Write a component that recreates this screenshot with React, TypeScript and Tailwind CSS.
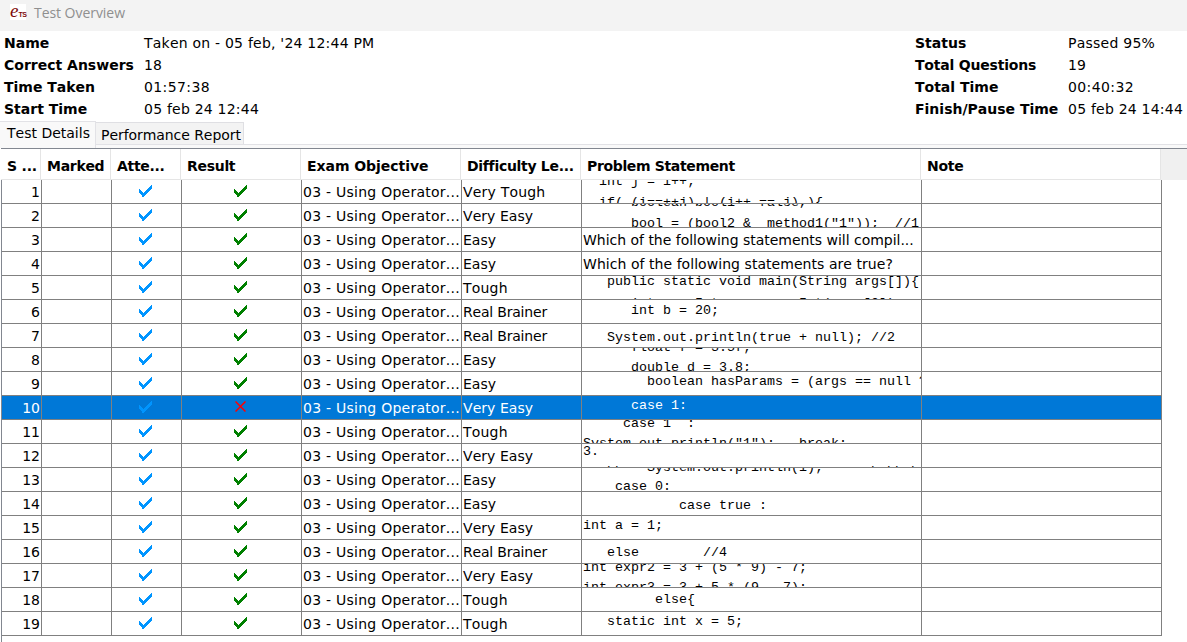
import React from "react";

type Line = { y: number; t: string };
type Row = { diff: string; text?: string; track?: string; code?: Line[] };

const rows: Row[] = [
  { diff: "Very Tough", code: [{ y: 6, t: "  int j = i++;" }, { y: 27, t: "  if( (i==++j) | (i++ == j) ){" }] },
  { diff: "Very Easy", code: [{ y: 3, t: "      boolean bool1 = false," }, { y: 24, t: '      bool = (bool2 &  method1("1"));  //1' }] },
  { diff: "Easy", text: "Which of the following statements will compil...", track: "tracking-[-0.02px]" },
  { diff: "Easy", text: "Which of the following statements are true?", track: "tracking-[0.05px]" },
  { diff: "Tough", code: [{ y: 10, t: "   public static void main(String args[]){" }, { y: 32, t: "      int x = Integer.parseInt(args[0]);" }] },
  { diff: "Real Brainer", code: [{ y: 15, t: "      int b = 20;" }] },
  { diff: "Real Brainer", code: [{ y: 18, t: "   System.out.println(true + null); //2" }] },
  { diff: "Easy", code: [{ y: 4, t: "      float f = 3.5f;" }, { y: 24, t: "      double d = 3.8;" }] },
  { diff: "Easy", code: [{ y: 14, t: "        boolean hasParams = (args == null ? false : true);" }] },
  { diff: "Very Easy", code: [{ y: 14, t: "      case 1:" }] },
  { diff: "Tough", code: [{ y: 8, t: "     case 1  :" }, { y: 28, t: 'System.out.println("1");   break;' }] },
  { diff: "Very Easy", code: [{ y: 12, t: "3." }, { y: 32, t: "   bb                               b bh b" }] },
  { diff: "Easy", code: [{ y: 4, t: "        System.out.println(i);" }, { y: 23, t: "    case 0:" }] },
  { diff: "Easy", code: [{ y: 18, t: "            case true :" }] },
  { diff: "Very Easy", code: [{ y: 14, t: "int a = 1;" }] },
  { diff: "Real Brainer", code: [{ y: 17, t: "   else        //4" }] },
  { diff: "Very Easy", code: [{ y: 8, t: "int expr2 = 3 + (5 * 9) - 7;" }, { y: 28, t: "int expr3 = 3 + 5 * (9 - 7);" }] },
  { diff: "Tough", code: [{ y: 16, t: "         else{" }] },
  { diff: "Tough", code: [{ y: 14, t: "   static int x = 5;" }] },
];

const diffTrack: Record<string, string> = {
  "Very Tough": "tracking-[0.2px]",
  "Very Easy": "tracking-[0.05px]",
  "Real Brainer": "tracking-[-0.2px]",
  Tough: "tracking-[0.2px]",
  Easy: "",
};

const headers: [string, string][] = [
  ["S ...", "tracking-[-0.2px]"],
  ["Marked", "tracking-[-0.3px]"],
  ["Atte...", "tracking-[-0.3px]"],
  ["Result", "tracking-[-0.3px]"],
  ["Exam Objective", "tracking-[-0.05px]"],
  ["Difficulty Le...", "tracking-[-0.3px]"],
  ["Problem Statement", "tracking-[-0.35px]"],
  ["Note", "tracking-[-0.3px]"],
];

const cols = "grid grid-cols-[40px_70px_70px_120px_160px_120px_340px_240px]";

function Check({ className }: { className: string }) {
  return (
    <svg width="13" height="12" viewBox="0 0 13 12" className={className} shapeRendering="crispEdges">
      <path d="M0 4H1L4 8L12 0H13V3L5 11V12H3V11L0 8Z" fill="currentColor" />
    </svg>
  );
}

function Cross() {
  return (
    <svg width="11" height="11" viewBox="0 0 11 11" className="text-[#ff0000]">
      <path d="M0.5 0.5L10.5 10.5M10.5 0.5L0.5 10.5" stroke="currentColor" strokeWidth="1.5" fill="none" />
    </svg>
  );
}

function Info({ items, className }: { items: [string, string, string][]; className: string }) {
  return (
    <dl className={className}>
      {items.map(([k, v, track]) => (
        <React.Fragment key={k}>
          <dt className={k === "Total Questions" ? "font-bold tracking-[-0.2px]" : "font-bold"}>{k}</dt>
          <dd className={track}>{v}</dd>
        </React.Fragment>
      ))}
    </dl>
  );
}

export default function App() {
  return (
    <div className="flex h-[642px] w-[1187px] flex-col overflow-hidden bg-white font-['DejaVu_Sans',sans-serif] text-[14px] leading-[22px] whitespace-nowrap text-black [font-kerning:none]">
      <header className="flex h-[31px] shrink-0 items-start bg-[#f3f3f3] pl-[10px]">
        <div className="mt-1 flex h-4 w-4 items-baseline bg-white leading-[13px] text-[#7d0a0a]">
          <span className="font-['Liberation_Serif',serif] text-[19px] italic">e</span>
          <span className="font-['Liberation_Sans',sans-serif] text-[7px] font-bold tracking-[-0.5px]">TS</span>
        </div>
        <h1 className="ml-2 mt-0.5 font-['Open_Sans',sans-serif] text-[14px] tracking-[-0.05px] text-[#8f8f8f]">Test Overview</h1>
      </header>
      <section className="flex h-[90px] shrink-0 justify-between pr-[3px] pl-1 pt-px">
        <Info
          className="grid grid-cols-[140px_auto] content-start"
          items={[
            ["Name", "Taken on - 05 feb, '24 12:44 PM", "tracking-[0.22px]"],
            ["Correct Answers", "18", ""],
            ["Time Taken", "01:57:38", "tracking-[0.4px]"],
            ["Start Time", "05 feb 24 12:44", "tracking-[0.22px]"],
          ]}
        />
        <Info
          className="grid w-[269px] grid-cols-[153px_auto] content-start"
          items={[
            ["Status", "Passed 95%", "tracking-[0.25px]"],
            ["Total Questions", "19", ""],
            ["Total Time", "00:40:32", "tracking-[0.4px]"],
            ["Finish/Pause Time", "05 feb 24 14:44", "tracking-[0.22px]"],
          ]}
        />
      </section>
      <nav className="flex h-[27px] shrink-0 items-stretch">
        <div className="h-[27px] w-[96px] border-t border-r border-[#e2e2e6] bg-[#f9f9f9] pl-[7px] leading-[22px]">Test Details</div>
        <div className="flex flex-1 flex-col">
          <div className="mt-px h-[22px] w-[148px] border-t border-r border-[#dfdfe3] bg-[#f3f3f3] pl-[5px] leading-[25px] tracking-[-0.06px]">Performance Report</div>
          <div className="h-1 border-t border-[#e2e2e6] bg-[#f9f9f9]" />
        </div>
      </nav>
      <main className="ml-px flex flex-1 flex-col border-t border-l border-[#828790]">
        <div className="flex h-[31px] shrink-0 bg-[#f0f0f0]">
          <div className={`${cols} -ml-px border-b border-[#e5e5e5] bg-white leading-[34px] font-bold`}>
            {headers.map(([h, track]) => (
              <div key={h} className={`overflow-hidden border-r border-[#e5e5e5] pl-[6px] ${track}`}>{h}</div>
            ))}
          </div>
        </div>
        {rows.map((r, i) => {
          const sel = i === 9;
          const cell = "overflow-hidden border-r border-b border-[#808080]";
          return (
            <div key={i} className={`${cols} h-6 w-[1160px] shrink-0 leading-6 ${sel ? "bg-[#0078d7] text-white" : ""}`}>
              <div className={`${cell} pr-[1px] text-right`}>{i + 1}</div>
              <div className={cell} />
              <div className={`${cell} pt-[5px] pl-[27px]`}><Check className="text-[#0095ff]" /></div>
              <div className={`${cell} pt-[5px] ${sel ? "pl-[53px]" : "pl-[52px]"}`}>{sel ? <Cross /> : <Check className="text-[#008000]" />}</div>
              <div className={`${cell} pl-[1px] tracking-[0.25px]`}>03 - Using Operator...</div>
              <div className={`${cell} pl-[1px] ${diffTrack[r.diff]}`}>{r.diff}</div>
              <div className={`${cell} relative pl-[1px] ${r.track ?? ""}`}>
                {r.text}
                {r.code?.map((l) => (
                  <pre
                    key={l.y}
                    className="absolute left-[1px] font-['Liberation_Mono',monospace] text-[13.33px] leading-5"
                    style={{ top: l.y - 14 }}
                  >
                    {l.t}
                  </pre>
                ))}
              </div>
              <div className={cell} />
            </div>
          );
        })}
      </main>
    </div>
  );
}
